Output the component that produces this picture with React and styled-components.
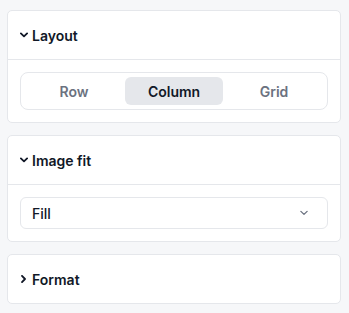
import React from "react";
import styled, { createGlobalStyle } from "styled-components";

const Global = createGlobalStyle`
  html, body { margin: 0; padding: 0; background: #f6f7f9; }
  body { font-family: Inter, "Noto Sans", sans-serif; -webkit-font-smoothing: antialiased; }
`;

const Page = styled.div`
  display: flex;
  flex-direction: column;
  gap: 12px;
  padding: 10px 8px 10px 7px;
`;

const Card = styled.section`
  background: #ffffff;
  border: 1px solid #e5e7eb;
  border-radius: 5px;
`;

const Header = styled.div`
  height: 48px;
  display: flex;
  align-items: center;
  gap: 4px;
  padding: 0 12px;
  font-size: 14px;
  font-weight: 600;
  color: #111827;
  border-bottom: ${(p) => (p.$open ? "1px solid #e5e7eb" : "none")};
`;

const Body = styled.div`
  padding: 12px;
`;

const Segmented = styled.div`
  display: grid;
  grid-template-columns: repeat(3, 1fr);
  gap: 2px;
  padding: 4px;
  border: 1px solid #e5e7eb;
  border-radius: 8px;
`;

const Segment = styled.div`
  height: 28px;
  display: flex;
  align-items: center;
  justify-content: center;
  border-radius: 6px;
  font-size: 14px;
  font-weight: 600;
  color: ${(p) => (p.$active ? "#111827" : "#6b7280")};
  background: ${(p) => (p.$active ? "#e5e7eb" : "transparent")};
`;

const Select = styled.div`
  height: 30px;
  display: flex;
  align-items: center;
  justify-content: space-between;
  padding: 0 19px 0 11px;
  border: 1px solid #e5e7eb;
  border-radius: 6px;
  font-size: 14px;
  font-weight: 500;
  color: #111827;
`;

const ChevronDown = ({ color = "#111827", sw = 1.8 }) => (
  <svg width="8" height="8" viewBox="0 0 8 8" fill="none">
    <path d="M0.9 2.4 L4 5.4 L7.1 2.4" stroke={color} strokeWidth={sw} strokeLinecap="round" strokeLinejoin="round" />
  </svg>
);

const ChevronRight = () => (
  <svg width="8" height="8" viewBox="0 0 8 8" fill="none">
    <path d="M2 0.9 L5 4 L2 7.1" stroke="#111827" strokeWidth="1.8" strokeLinecap="round" strokeLinejoin="round" />
  </svg>
);

export default function App() {
  return (
    <>
      <Global />
      <Page>
        <Card>
          <Header $open>
            <ChevronDown />
            Layout
          </Header>
          <Body>
            <Segmented>
              <Segment>Row</Segment>
              <Segment $active>Column</Segment>
              <Segment>Grid</Segment>
            </Segmented>
          </Body>
        </Card>
        <Card>
          <Header $open>
            <ChevronDown />
            Image fit
          </Header>
          <Body>
            <Select>
              Fill
              <ChevronDown color="#6b7280" sw={1.3} />
            </Select>
          </Body>
        </Card>
        <Card>
          <Header>
            <ChevronRight />
            Format
          </Header>
        </Card>
      </Page>
    </>
  );
}
